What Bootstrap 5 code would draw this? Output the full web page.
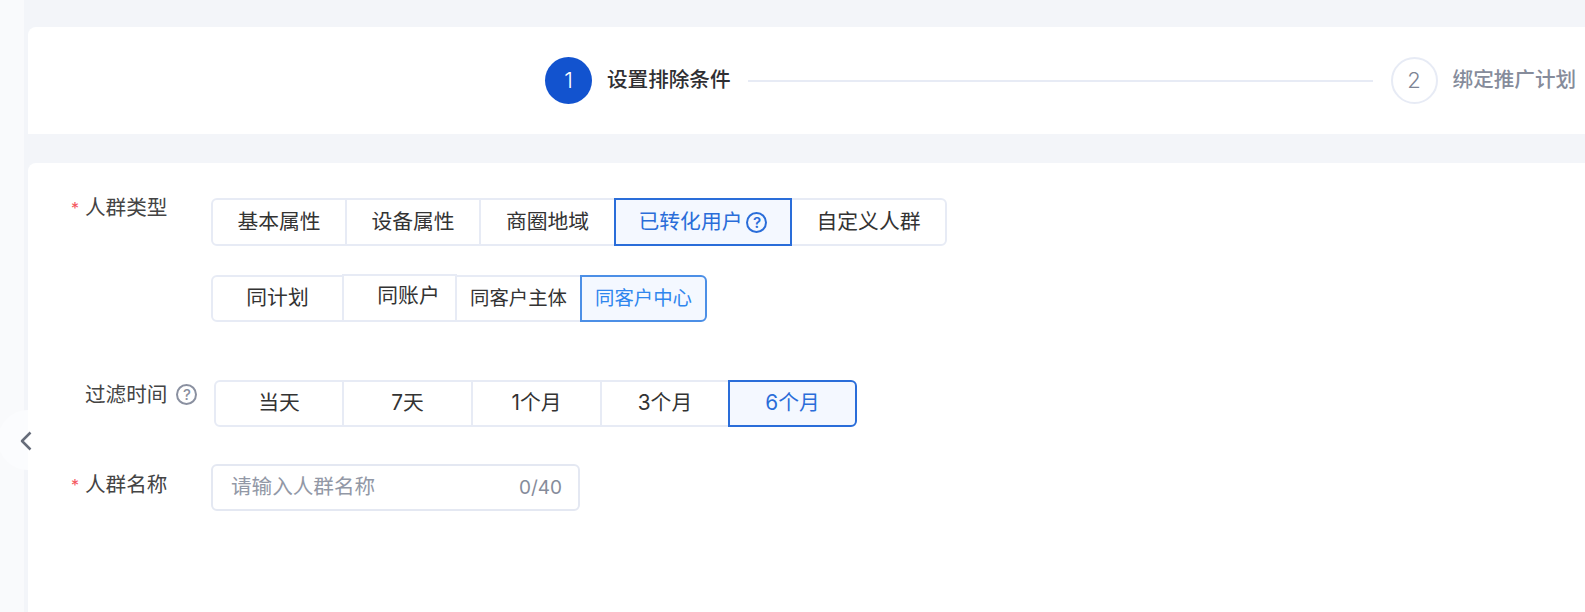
<!DOCTYPE html>
<html lang="zh-CN">
<head>
<meta charset="utf-8">
<title>设置排除条件</title>
<link href="https://cdn.jsdelivr.net/npm/bootstrap@5.3.0/dist/css/bootstrap.min.css" rel="stylesheet">
<style>
html,body{height:100%;overflow:hidden}
body{background:#f3f5f9;color:#333;font-family:Inter,"Noto Sans CJK SC",sans-serif;font-size:20.6px;--seg-line:#e7ebf5;--seg-blue:#2a6dd9}
.rail{width:24px;flex:none;background:#f9fafc}
.page-main{padding-left:4px;min-width:0}
.steps-panel{height:107px;margin-top:27px;background:#fff;border-top-left-radius:8px;padding-left:517px}
.form-panel{margin-top:29px;background:#fff;border-top-left-radius:8px;padding-top:35px;height:449px}
.step-dot{width:47px;height:47px;border-radius:50%;flex:none;font-size:22px;font-weight:300}
.step-on{background:#1253cf;color:#fff}
.step-off{border:2px solid var(--seg-line);color:#7d8494}
.step-title{font-size:20.6px;font-weight:500;line-height:1;margin-left:15px;white-space:nowrap;color:#2f2f33}
.step-muted{color:#868c9b}
.step-line{width:625px;height:2px;background:var(--seg-line);flex:none;margin:0 18px 0 17px}
.field-label{width:183px;flex:none;padding-left:43px;line-height:20px;display:flex;color:#444}
.lab-wide{width:186px}
.req{width:14px;color:#f4545c;font-size:16px;line-height:20px;flex:none}
.req-none{width:14px;flex:none}
.seg-group{--bs-border-width:2px}
.seg-group .btn{--bs-btn-color:#333;--bs-btn-bg:#fff;--bs-btn-border-color:var(--seg-line);--bs-btn-hover-color:#333;--bs-btn-hover-bg:#fff;--bs-btn-hover-border-color:var(--seg-line);--bs-btn-active-color:var(--seg-blue);--bs-btn-active-bg:#f4f8ff;--bs-btn-active-border-color:var(--seg-blue);--bs-btn-border-radius:6px;--bs-btn-font-size:20.8px;--bs-btn-padding-x:0;--bs-btn-padding-y:0;flex:none;display:flex;align-items:center;justify-content:center;white-space:nowrap;line-height:1}
.seg-h48 .btn{height:48px}
.seg-h47 .btn{height:47px}
.w133{width:133px}.w115{width:115px}.w127{width:127px}
.w136{width:136px}.w137{width:137px}.w178{width:178px}.w157{width:157px}
.w130{width:130px}.w131{width:131px}.w129{width:129px}
.seg-group .sub-txt{font-size:19.4px}
.seg-group .raised{margin-top:-1px;height:48px;padding-left:18px;padding-bottom:4px}
.seg-group .sky{--bs-btn-active-color:#2f86ee;--bs-btn-active-border-color:#4c8fe6;border-top-right-radius:6px!important;border-bottom-right-radius:6px!important}
.tip-mark{width:21px;height:21px;border-radius:50%;border:2px solid currentColor;font-size:15px;line-height:1;font-weight:600;flex:none}
.tip-active{margin-left:4px}
.tip-grey{color:#8a90a0;margin-left:9px;margin-top:-1px;font-weight:500}
.row-two{margin-top:29px;padding-left:183px}
.row-three{margin-top:58px}
.row-four{margin-top:37px}
.lab-three{padding-top:5px}
.lab-four{padding-top:11px}
.name-box{width:369px;height:47px;border:2px solid #e4e8f2;border-radius:6px;padding:0 16px 0 18px;background:#fff}
.name-box .form-control{border:0;padding:0;box-shadow:none;font-size:20.6px;color:#333;background:transparent;font-family:inherit}
.name-box .form-control::placeholder{color:#9298a6}
.name-count{color:#868c9b;line-height:1;font-size:19px}
.side-tab{left:-2px;top:410px;width:30px;height:60px;background:#fbfcfe;border-radius:30px 0 0 30px}
.side-chev{left:19px;top:431px}
</style>
</head>
<body class="d-flex position-relative">
<div class="rail"></div>
<main class="page-main flex-grow-1">
  <section class="steps-panel d-flex align-items-center">
    <div class="step-dot step-on d-flex align-items-center justify-content-center">1</div>
    <div class="step-title">设置排除条件</div>
    <div class="step-line"></div>
    <div class="step-dot step-off d-flex align-items-center justify-content-center">2</div>
    <div class="step-title step-muted">绑定推广计划</div>
  </section>
  <section class="form-panel">
    <div class="d-flex">
      <div class="field-label"><span class="req">*</span><span>人群类型</span></div>
      <div class="btn-group seg-group seg-h48" role="group">
        <button class="btn w136" type="button">基本属性</button>
        <button class="btn w136" type="button">设备属性</button>
        <button class="btn w137" type="button">商圈地域</button>
        <button class="btn w178 active" type="button">已转化用户<span class="tip-mark tip-active d-flex align-items-center justify-content-center">?</span></button>
        <button class="btn w157" type="button">自定义人群</button>
      </div>
    </div>
    <div class="row-two d-flex">
      <div class="btn-group seg-group seg-h47" role="group">
        <button class="btn w133" type="button">同计划</button>
        <button class="btn w115 raised" type="button">同账户</button>
        <button class="btn w127 sub-txt" type="button">同客户主体</button>
        <button class="btn w127 sub-txt active sky" type="button">同客户中心</button>
      </div>
    </div>
    <div class="row-three d-flex">
      <div class="field-label lab-wide lab-three"><span class="req-none"></span><span>过滤时间</span><span class="tip-mark tip-grey d-flex align-items-center justify-content-center">?</span></div>
      <div class="btn-group seg-group seg-h47" role="group">
        <button class="btn w130" type="button">当天</button>
        <button class="btn w131" type="button">7天</button>
        <button class="btn w131" type="button">1个月</button>
        <button class="btn w130" type="button">3个月</button>
        <button class="btn w129 active" type="button">6个月</button>
      </div>
    </div>
    <div class="row-four d-flex">
      <div class="field-label lab-four"><span class="req">*</span><span>人群名称</span></div>
      <div class="name-box d-flex align-items-center">
        <input class="form-control" type="text" placeholder="请输入人群名称">
        <span class="name-count">0/40</span>
      </div>
    </div>
  </section>
</main>
<div class="side-tab position-absolute"></div>
<svg class="side-chev position-absolute" width="14" height="20" viewBox="0 0 14 20" fill="none" stroke="#666c7a" stroke-width="2.5" stroke-linejoin="round"><path d="M11.5 1.5 3 10l8.500 8.500"/></svg>
<script src="https://cdn.jsdelivr.net/npm/bootstrap@5.3.0/dist/js/bootstrap.bundle.min.js"></script>
</body>
</html>
